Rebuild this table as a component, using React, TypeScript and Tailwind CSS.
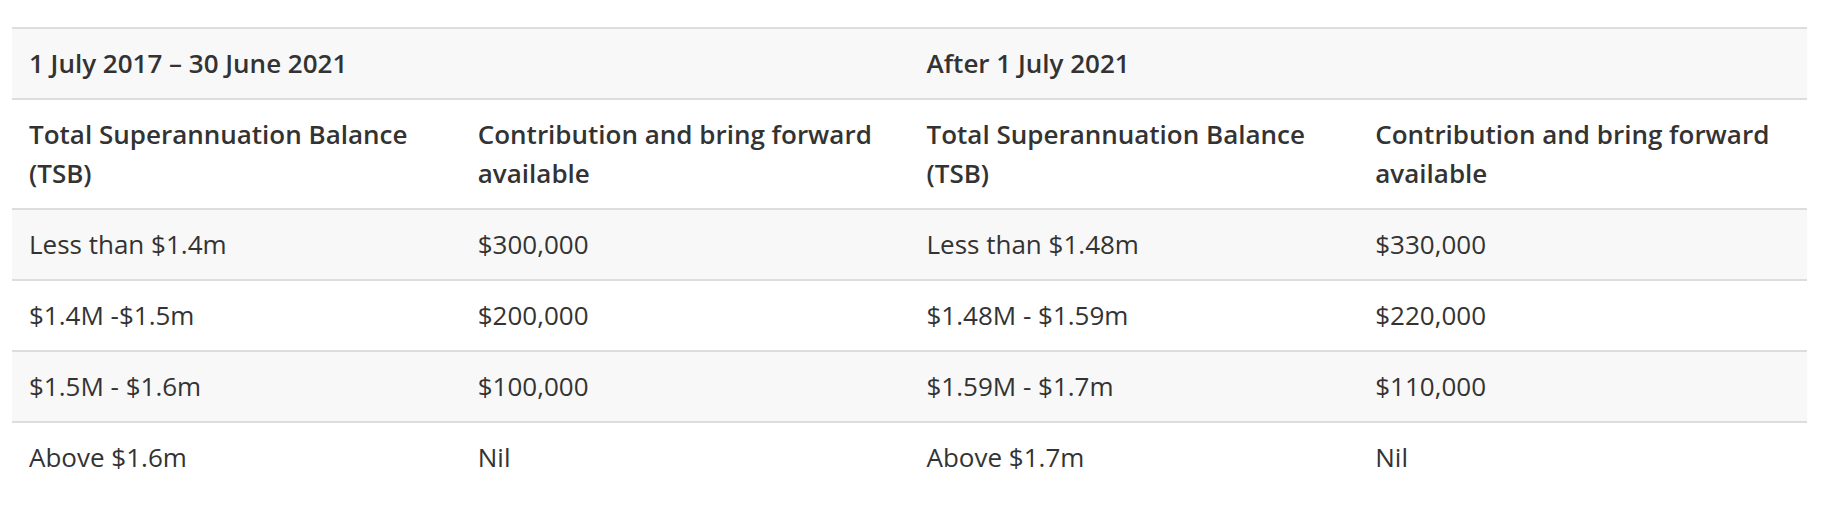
import React from "react";

type Row = [string, string, string, string];

const rows: Row[] = [
  ["Less than $1.4m", "$300,000", "Less than $1.48m", "$330,000"],
  ["$1.4M -$1.5m", "$200,000", "$1.48M - $1.59m", "$220,000"],
  ["$1.5M - $1.6m", "$100,000", "$1.59M - $1.7m", "$110,000"],
  ["Above $1.6m", "Nil", "Above $1.7m", "Nil"],
];

const cell = "px-[17px] py-[15px] text-left align-top";

export default function App() {
  return (
    <div className="w-[1828px] h-[508px] bg-white pt-[27px] pl-[12px]" style={{ fontFamily: '"Open Sans", "Noto Sans", sans-serif' }}>
      <table className="w-[1795px] table-fixed border-collapse text-[26px] leading-[39px] text-[#333333]">
        <colgroup>
          <col className="w-1/4" />
          <col className="w-1/4" />
          <col className="w-1/4" />
          <col className="w-1/4" />
        </colgroup>
        <thead>
          <tr className="border-t-2 border-[#dddddd] bg-[#f8f8f8]">
            <th colSpan={2} className={`${cell} font-semibold`}>
              1 July 2017 – 30 June 2021
            </th>
            <th colSpan={2} className={`${cell} font-semibold`}>
              After 1 July 2021
            </th>
          </tr>
          <tr className="border-t-2 border-[#dddddd] bg-white">
            <th className={`${cell} font-semibold`}>Total Superannuation Balance (TSB)</th>
            <th className={`${cell} font-semibold`}>Contribution and bring forward available</th>
            <th className={`${cell} font-semibold`}>Total Superannuation Balance (TSB)</th>
            <th className={`${cell} font-semibold`}>Contribution and bring forward available</th>
          </tr>
        </thead>
        <tbody>
          {rows.map((r, i) => (
            <tr key={i} className={`border-t-2 border-[#dddddd] ${i % 2 === 0 ? "bg-[#f8f8f8]" : "bg-white"}`}>
              {r.map((v, j) => (
                <td key={j} className={`${cell} font-normal`}>
                  {v}
                </td>
              ))}
            </tr>
          ))}
        </tbody>
      </table>
    </div>
  );
}
